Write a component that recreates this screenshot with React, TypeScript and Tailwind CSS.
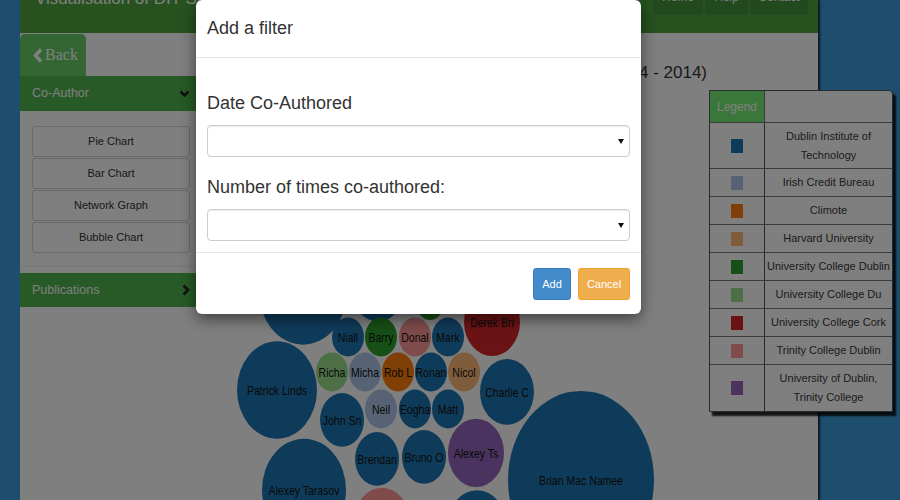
import React from "react";

const BLUE = "#1f77b4";
const bubbles: [number, number, number, string, string][] = [
  [303, 291, 44, BLUE, ""],
  [378, 290, 26, BLUE, ""],
  [430, 303, 14, "#2ca02c", ""],
  [348, 337, 16, BLUE, "Niall"],
  [381, 337, 16, "#2ca02c", "Barry"],
  [415, 337, 16, "#ff9896", "Donal"],
  [448, 337, 16, BLUE, "Mark"],
  [492, 322, 28, "#d62728", "Derek Bri"],
  [332, 372, 16, "#98df8a", "Richa"],
  [365, 372, 16, "#aec7e8", "Micha"],
  [398, 372, 16, "#ff7f0e", "Rob L"],
  [431, 372, 16, BLUE, "Ronan"],
  [464, 372, 16, "#ffbb78", "Nicol"],
  [507, 392, 27, BLUE, "Charlie C"],
  [277, 390, 40, BLUE, "Patrick Linds"],
  [342, 420, 22, BLUE, "John Sn"],
  [381, 409, 16, "#aec7e8", "Neil"],
  [415, 409, 16, BLUE, "Eogha"],
  [448, 409, 16, BLUE, "Matt"],
  [377, 459, 22, BLUE, "Brendan"],
  [424, 457, 22, BLUE, "Bruno O"],
  [476, 453, 28, "#9467bd", "Alexey Ts"],
  [304, 490, 42, BLUE, "Alexey Tarasov"],
  [581, 480, 73, BLUE, "Brian Mac Namee"],
  [382, 522, 28, "#ff9896", ""],
  [477, 527, 30, BLUE, ""],
];

const legend: [string, string[], boolean][] = [
  ["#1f77b4", ["Dublin Institute of", "Technology"], true],
  ["#aec7e8", ["Irish Credit Bureau"], false],
  ["#ff7f0e", ["Climote"], false],
  ["#ffbb78", ["Harvard University"], false],
  ["#2ca02c", ["University College Dublin"], false],
  ["#98df8a", ["University College Du"], false],
  ["#d62728", ["University College Cork"], false],
  ["#ff9896", ["Trinity College Dublin"], false],
  ["#9467bd", ["University of Dublin,", "Trinity College"], true],
];

function ChevronDown() {
  return (
    <svg width="11" height="8" viewBox="0 0 11 8">
      <path d="M1.5 1.5 L5.5 5.5 L9.5 1.5" fill="none" stroke="#222" strokeWidth="2.6" />
    </svg>
  );
}
function ChevronRight() {
  return (
    <svg width="8" height="12" viewBox="0 0 8 12">
      <path d="M1.5 1.5 L6 6 L1.5 10.5" fill="none" stroke="#222" strokeWidth="2.6" />
    </svg>
  );
}
function Caret() {
  return (
    <svg width="6" height="5" viewBox="0 0 6 5">
      <path d="M0 0 L6 0 L3 5 Z" fill="#111" />
    </svg>
  );
}

export default function App() {
  return (
    <div className="w-[900px] h-[500px] relative overflow-hidden bg-[#3c9cdc] font-['Liberation_Sans',Arial,sans-serif]">
      <div className="ml-[20px] w-[798px] h-full flex flex-col shadow-[2px_0_2px_rgba(0,0,0,0.7)]">
        {/* header */}
        <div className="h-[33px] shrink-0 bg-[#4ea43e] rounded-br-[4px] flex justify-between overflow-hidden">
          <div className="pl-[15px] -mt-[12px] text-[17px] leading-[22px] text-white whitespace-nowrap">
            Visualisation of DIT Staff Research
          </div>
          <div className="flex gap-[2px] pr-[10px] -mt-[22px] h-[37px]">
            {[
              ["Home", "w-[50px]"],
              ["Help", "w-[43px]"],
              ["Contact", "w-[58px]"],
            ].map(([t, w]) => (
              <div key={t} className={`${w} h-[37px] bg-[#46943c] rounded-b-[3px] flex items-center justify-center text-[12px] text-white`}>
                {t}
              </div>
            ))}
          </div>
        </div>
        {/* body */}
        <div className="flex-1 bg-white flex">
          <div className="w-[182px] shrink-0 flex flex-col">
            <div className="mt-px w-[66px] h-[42px] bg-[#68cc68] rounded-t-[5px] flex items-center pl-[13px] gap-[2px] text-white">
              <svg width="10" height="15" viewBox="0 0 10 15">
                <path d="M8 1.5 L2.5 7.5 L8 13.5" fill="none" stroke="#ffffff" strokeWidth="3.4" />
              </svg>
              <span className="font-['Liberation_Serif',serif] text-[16px]">Back</span>
            </div>
            <div className="h-[35px] bg-[#4eb44c] flex items-center justify-between px-[12px] text-[12.5px] text-white">
              <span>Co-Author</span>
              <ChevronDown />
            </div>
            <div className="pt-[15px] pb-[13px] px-[12px] flex flex-col gap-[1px] border-b border-[#eeeeee]">
              {["Pie Chart", "Bar Chart", "Network Graph", "Bubble Chart"].map((t) => (
                <div key={t} className="h-[31px] border border-[#d4d4d4] rounded-[3px] flex items-center justify-center text-[11px] text-[#333]">
                  {t}
                </div>
              ))}
            </div>
            <div className="mt-[6px] h-[34px] bg-[#4eb44c] flex items-center justify-between px-[12px] text-[12.5px] text-white">
              <span>Publications</span>
              <ChevronRight />
            </div>
          </div>
          <div className="flex-1 flex flex-col">
            <div className="mt-[28px] h-[24px] leading-[24px] text-[17px] text-right pr-[111px] text-[#333] whitespace-nowrap">
              Co-Authors Network (2004 - 2014)
            </div>
            <svg className="mt-[165px] block" width="616" height="250" viewBox="0 0 616 205" preserveAspectRatio="none">
              {bubbles.map(([cx, cy, r, c, label], i) => {
                const x = cx - 202;
                const y = (cy - 250) / 1.22;
                return (
                  <g key={i}>
                    <circle cx={x} cy={y} r={r} fill={c} />
                    {label && (
                      <text x={x} y={y} textAnchor="middle" dominantBaseline="central" fontSize="10.5" fill="#111" fontFamily="Liberation Sans, Arial, sans-serif">
                        {label}
                      </text>
                    )}
                  </g>
                );
              })}
            </svg>
          </div>
        </div>
      </div>

      {/* legend */}
      <div className="absolute left-[709px] top-[90px] w-[184px] border border-[#555] rounded-tr-[4px] bg-white shadow-[3px_4px_2px_rgba(0,0,0,0.85)] text-[11px] text-[#383838]">
        <div className="flex h-[32px] border-b border-[#777]">
          <div className="w-[55px] bg-[#75ee75] flex items-center justify-center text-[12px] text-white border-r border-[#777]">Legend</div>
          <div className="flex-1" />
        </div>
        {legend.map(([c, lines, tall], i) => (
          <div key={i} className={`flex ${tall ? "h-[46px]" : "h-[28px]"} ${i < legend.length - 1 ? "border-b border-[#777]" : ""}`}>
            <div className="w-[55px] flex items-center justify-center border-r border-[#555]">
              <div className="w-[12px] h-[14px]" style={{ backgroundColor: c }} />
            </div>
            <div className="flex-1 flex flex-col items-center justify-center leading-[19px] text-center whitespace-nowrap">
              {lines.map((l) => (
                <span key={l}>{l}</span>
              ))}
            </div>
          </div>
        ))}
      </div>

      {/* modal backdrop */}
      <div className="absolute inset-0 bg-black/50" />

      {/* modal */}
      <div className="absolute left-[196px] top-0 w-[445px] bg-white rounded-[6px] shadow-[0_5px_15px_rgba(0,0,0,0.5)] text-[#333]">
        <div className="h-[58px] px-[11px] flex items-center border-b border-[#e5e5e5] text-[18px]">Add a filter</div>
        <div className="px-[11px] pt-[32px] pb-[11px] border-b border-[#e5e5e5]">
          <div className="text-[18px] leading-[26px]">Date Co-Authored</div>
          <div className="mt-[9px] h-[32px] border border-[#ccc] rounded-[4px] shadow-[inset_0_1px_1px_rgba(0,0,0,0.075)] flex items-center justify-end pr-[5px]">
            <Caret />
          </div>
          <div className="mt-[17px] text-[18px] leading-[26px]">Number of times co-authored:</div>
          <div className="mt-[9px] h-[32px] border border-[#ccc] rounded-[4px] shadow-[inset_0_1px_1px_rgba(0,0,0,0.075)] flex items-center justify-end pr-[5px]">
            <Caret />
          </div>
        </div>
        <div className="pt-[15px] pb-[14px] px-[11px] flex justify-end gap-[7px]">
          <div className="w-[38px] h-[32px] bg-[#428bca] border border-[#357ebd] rounded-[3px] flex items-center justify-center text-[11px] text-white">Add</div>
          <div className="w-[52px] h-[32px] bg-[#f0ad4e] border border-[#eea236] rounded-[3px] flex items-center justify-center text-[11px] text-white">Cancel</div>
        </div>
      </div>
    </div>
  );
}
